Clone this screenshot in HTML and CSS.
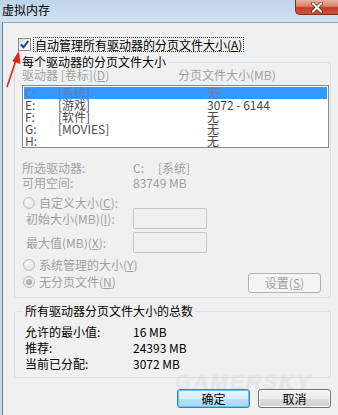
FILE: index.html
```html
<!DOCTYPE html>
<html lang="zh-CN">
<head>
<meta charset="utf-8">
<title>虚拟内存</title>
<link rel="stylesheet" href="styles.css">
</head>
<body>
<div class="titlebar">
  <span class="title">虚拟内存</span>
  <div class="close">
    <svg width="14" height="11" viewBox="0 0 14 11"><path d="M3 1.5 L11 9.5 M11 1.5 L3 9.5" stroke="#5a1c14" stroke-width="3.6" stroke-linecap="round"/><path d="M3 1.5 L11 9.5 M11 1.5 L3 9.5" stroke="#ffffff" stroke-width="2.2" stroke-linecap="round"/></svg>
  </div>
</div>
<div class="window">
  <div class="content">
    <div class="auto-row">
      <span class="checkbox"><svg width="11" height="11" viewBox="0 0 11 11"><path d="M2 5.5 L4.5 8.3 L9.3 2" fill="none" stroke="#1f3f86" stroke-width="2"/></svg></span>
      <span class="auto-label">自动管理所有驱动器的分页文件大小(<u>A</u>)</span>
    </div>

    <fieldset class="group group-drives">
      <legend>每个驱动器的分页文件大小</legend>
      <div class="list-head disabled"><span>驱动器 [卷标](<u>D</u>)</span><span>分页文件大小(MB)</span></div>
      <div class="listbox">
        <div class="row selected"><span>C:</span><span>[系统]</span><span>无</span></div>
        <div class="row"><span>E:</span><span>[游戏]</span><span>3072 - 6144</span></div>
        <div class="row"><span>F:</span><span>[软件]</span><span>无</span></div>
        <div class="row"><span>G:</span><span>[MOVIES]</span><span>无</span></div>
        <div class="row"><span>H:</span><span></span><span>无</span></div>
      </div>
      <div class="info disabled">
        <span>所选驱动器:</span><span class="drive-val"><span class="dl">C:</span><span>[系统]</span></span>
        <span>可用空间:</span><span>83749 MB</span>
      </div>
      <div class="radio-row custom disabled"><span class="radio"></span><span>自定义大小(<u>C</u>):</span></div>
      <div class="field-row disabled"><span>初始大小(MB)(<u>I</u>):</span><span class="textbox"></span></div>
      <div class="field-row second disabled"><span>最大值(MB)(<u>X</u>):</span><span class="textbox"></span></div>
      <div class="bottom-row">
        <div class="radios disabled">
          <div class="radio-row"><span class="radio"></span><span>系统管理的大小(<u>Y</u>)</span></div>
          <div class="radio-row"><span class="radio checked"><span class="dot"></span></span><span>无分页文件(<u>N</u>)</span></div>
        </div>
        <span class="btn btn-disabled">设置(<u>S</u>)</span>
      </div>
    </fieldset>

    <fieldset class="group group-total">
      <legend>所有驱动器分页文件大小的总数</legend>
      <div class="totals">
        <span>允许的最小值:</span><span>16 MB</span>
        <span>推荐:</span><span>24393 MB</span>
        <span>当前已分配:</span><span>3072 MB</span>
      </div>
    </fieldset>

    <div class="buttons">
      <span class="btn btn-default">确定</span>
      <span class="btn btn-normal">取消</span>
    </div>
  </div>
  <div class="watermark">GAMERSKY</div>
</div>
<svg class="arrow" width="30" height="100" viewBox="0 0 30 100">
  <line x1="7" y1="87" x2="16" y2="60" stroke="#e2231a" stroke-width="1.6"/>
  <polygon points="19,51 20.4,64 12.2,61.2" fill="#e2231a"/>
</svg>
</body>
</html>
```

FILE: styles.css
```css
* { box-sizing: border-box; }

body {
  margin: 0;
  width: 338px;
  height: 415px;
  overflow: hidden;
  position: relative;
  background: #c6d9ed;
  font-family: "Noto Sans CJK SC", "Liberation Sans", sans-serif;
  font-size: 12px;
  line-height: 12px;
  color: #000;
}

u { text-decoration: underline; text-underline-offset: 1px; }

.titlebar {
  height: 22px;
  display: flex;
  justify-content: space-between;
  align-items: flex-start;
  background: linear-gradient(#bed3e9, #d4e3f2);
}

.title {
  margin: 4px 0 0 2px;
  line-height: 12px;
  color: #000;
}

.close {
  width: 43px;
  height: 15px;
  display: flex;
  align-items: center;
  justify-content: center;
  border: 1px solid #7a2e22;
  border-top: none;
  border-right: none;
  border-radius: 0 0 0 5px;
  background: linear-gradient(#eab0a2 0%, #dc7d68 45%, #c43b24 55%, #cf5538 100%);
}

.window {
  position: relative;
  margin-left: 2px;
  height: 393px;
  border-left: 1px solid #6b7b8d;
  border-top: 1px solid #97a9bd;
  background: #f0f0f0;
}

.content {
  padding: 14px 7px 0 11px;
}

.auto-row {
  display: flex;
  align-items: flex-start;
  margin-left: 4px;
  height: 15px;
}

.checkbox {
  width: 13px;
  height: 13px;
  margin-top: 1px;
  border: 1px solid #8e8f8f;
  background: linear-gradient(135deg, #dcdcdc, #ffffff);
  display: flex;
  align-items: center;
  justify-content: center;
  margin-right: 2px;
}

.auto-label {
  border: 1px dotted #333;
  padding: 0 1px;
  line-height: 13px;
  height: 15px;
}

.group {
  margin: 4px 0 0;
  border: 1px solid #d5dfe5;
  border-radius: 3px;
  min-width: 0;
}

.group legend {
  padding: 0 2px;
  margin-left: -2px;
  line-height: 12px;
}

.group-drives {
  padding: 1px 1px 4px 7px;
}

.disabled { color: #a0a0a0; }

.list-head {
  display: grid;
  grid-template-columns: 156px 1fr;
  line-height: 12px;
}

.listbox {
  margin-top: 4px;
  width: 307px;
  height: 63px;
  border: 1px solid #828790;
  background: #fff;
  padding: 1px;
}

.row {
  display: grid;
  grid-template-columns: 33px 149px 1fr;
  height: 12px;
  line-height: 12px;
  padding-left: 1px;
  color: #4a4a4a;
  white-space: nowrap;
}

.row.selected {
  background: #3399ff;
  color: #5c7fb3;
}

.info {
  margin-top: 14px;
  display: grid;
  grid-template-columns: 111px 1fr;
  row-gap: 3px;
}

.drive-val { display: flex; }
.dl { width: 25px; }

.radio-row {
  display: flex;
  align-items: center;
  height: 12px;
  gap: 4px;
}

.radio-row.custom {
  margin-top: 9px;
  height: 10px;
}

.radio {
  width: 12px;
  height: 12px;
  margin-left: 1px;
  border-radius: 50%;
  border: 1px solid #b9b9b9;
  background: radial-gradient(circle at 40% 35%, #fafafa, #dedede);
  display: flex;
  align-items: center;
  justify-content: center;
  flex: none;
}

.dot {
  width: 6px;
  height: 6px;
  border-radius: 50%;
  background: radial-gradient(circle at 40% 35%, #c8c8c8, #8e8e8e);
}

.field-row {
  display: grid;
  grid-template-columns: 107px 74px;
  align-items: center;
  height: 21px;
  padding-left: 4px;
}

.field-row.second { margin-top: 3px; }

.textbox {
  height: 21px;
  border: 1px solid #c6c6c6;
  border-radius: 2px;
  background: #f0f0f0;
}

.bottom-row {
  margin-top: 6px;
  display: flex;
  align-items: flex-end;
}

.radios {
  display: flex;
  flex-direction: column;
  gap: 5px;
  padding-bottom: 5px;
}

.btn {
  display: flex;
  align-items: center;
  justify-content: center;
  width: 73px;
  border-radius: 3px;
  line-height: 12px;
}

.btn-disabled {
  margin-left: auto;
  margin-right: 8px;
  height: 20px;
  border: 1px solid #adb2b5;
  background: #f4f4f4;
  color: #a0a0a0;
}

.group-total {
  margin-top: 7px;
  padding: 7px 1px 5px 10px;
}

.totals {
  display: grid;
  grid-template-columns: 108px 1fr;
  line-height: 16px;
}

.buttons {
  margin-top: 11px;
  display: flex;
  justify-content: flex-end;
  gap: 8px;
}

.btn-default {
  height: 19px;
  border: 1px solid #3c7fb1;
  box-shadow: inset 0 0 0 1px #63c8f1;
  background: linear-gradient(#e6f5fd 0%, #d6effc 50%, #b9e3fb 50%, #a6d8f4 100%);
}

.btn-normal {
  height: 19px;
  border: 1px solid #707070;
  box-shadow: inset 0 0 0 1px #fbfbfb;
  background: linear-gradient(#f2f2f2 0%, #ebebeb 50%, #dddddd 50%, #cfcfcf 100%);
}

.watermark {
  position: absolute;
  left: 172px;
  top: 348px;
  font-family: "Liberation Sans", sans-serif;
  font-size: 21px;
  line-height: 21px;
  font-weight: bold;
  font-style: italic;
  letter-spacing: 2px;
  color: rgba(255, 255, 255, 0.45);
  text-shadow: 0 0 1px rgba(0, 0, 0, 0.12);
  pointer-events: none;
}

.arrow {
  position: absolute;
  left: 0;
  top: 0;
}
```
